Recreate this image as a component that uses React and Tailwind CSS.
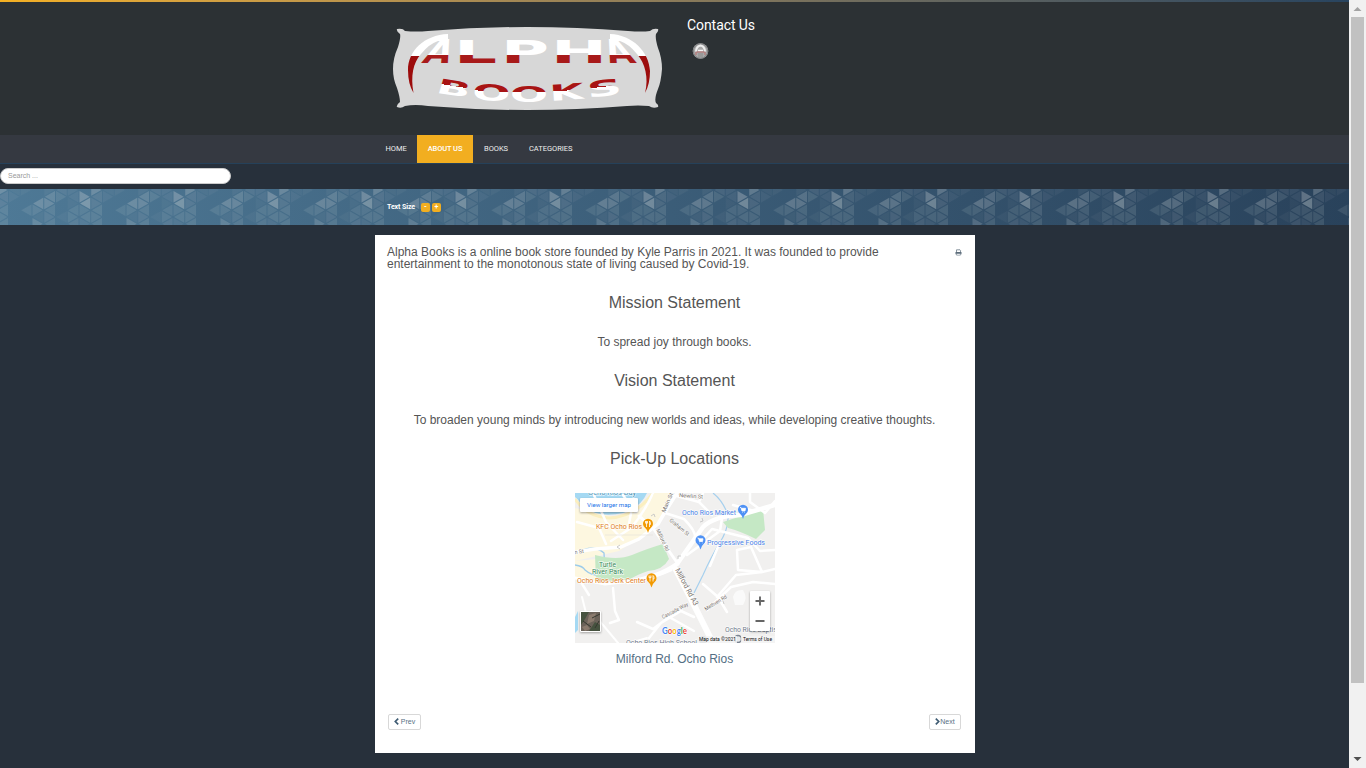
import React from "react";

const COL = 11.75;
const FACETS = [
  [0, "R", 1, 0.34], [0, "L", 7.75, 0.4], [0, "R", 14.5, 0.13], [0, "L", 21.25, 0.15], [0, "R", 28, 0.08],
  [1, "R", -5.75, 0.28], [1, "L", 1, 0.12], [1, "R", 7.75, 0.12], [1, "L", 14.5, 0.15], [1, "R", 21.25, 0.14], [1, "L", 28, 0.14],
  [2, "R", 1, 0.07], [2, "L", -5.75, 0.05],
  [3, "R", -5.75, 0.06], [3, "L", 14.5, 0.13],
  [4, "L", 7.75, 0.28], [4, "R", 14.5, 0.15], [4, "L", 21.25, 0.05], [4, "R", 28, 0.22],
  [5, "R", 7.75, 0.26], [5, "L", 1, 0.22], [5, "R", -5.75, 0.06], [5, "L", 14.5, 0.14], [5, "R", 21.25, 0.12], [5, "L", 28, 0.14],
  [6, "R", 1, 0.14], [6, "L", -5.75, 0.1], [6, "L", 21.25, 0.05],
  [7, "R", -5.75, 0.08], [7, "L", 1, 0.08], [7, "R", 7.75, 0.04], [7, "R", 21.25, 0.13], [7, "L", 14.5, 0.13], [7, "L", 28, 0.12],
];

function facetPoints(col, dir, y) {
  const a = col * COL + 0.5;
  const b = (col + 1) * COL - 0.5;
  const base = dir === "R" ? a : b;
  const tip = dir === "R" ? b - 0.6 : a + 0.6;
  return `${base},${y + 0.9} ${base},${y + 12.6} ${tip},${y + 6.75}`;
}

function FacetBand() {
  return (
    <svg className="absolute inset-0 h-full w-full" aria-hidden="true">
      <defs>
        <pattern id="facets" x="79" y="0" width="94" height="36" patternUnits="userSpaceOnUse">
          {FACETS.map(([c, d, y, o], i) => (
            <polygon key={i} points={facetPoints(c, d, y)} fill="#c4ccd0" fillOpacity={o} />
          ))}
        </pattern>
      </defs>
      <rect width="100%" height="36" fill="url(#facets)" />
    </svg>
  );
}

function LogoLetter({ ch, x, y, w, size, fill, turn }) {
  return (
    <text
      transform={turn ? `translate(${x} ${y}) ${turn}` : `translate(${x} ${y})`}
      fontSize={size}
      fontFamily="'DejaVu Sans', 'Liberation Sans', sans-serif"
      fontWeight="700"
      textLength={w}
      lengthAdjust="spacingAndGlyphs"
      fill={fill}
    >
      {ch}
    </text>
  );
}

function Logo() {
  return (
    <svg width="275" height="90" viewBox="390 24 275 90" className="block" role="img">
      <defs>
        <linearGradient id="topWord" gradientUnits="userSpaceOnUse" x1="0" x2="0" y1="-24" y2="0">
          <stop offset=".66" stopColor="#fff" />
          <stop offset=".66" stopColor="#a81a1a" />
        </linearGradient>
        <linearGradient id="lowWord" gradientUnits="userSpaceOnUse" x1="0" x2="0" y1="-16" y2="0">
          <stop offset=".42" stopColor="#a81414" />
          <stop offset=".42" stopColor="#fff" />
        </linearGradient>
        <linearGradient id="swoosh" gradientUnits="userSpaceOnUse" x1="0" x2="0" y1="34" y2="94">
          <stop offset=".36" stopColor="#fff" />
          <stop offset=".36" stopColor="#9c0c0c" />
        </linearGradient>
      </defs>
      <path
        fill="#d7d7d7"
        d="M397 29Q403 28 405 31Q416 32 428 31Q478 27 527 27Q577 27 628 31Q642 32 650 31Q653 28 658 29Q659 31 656 34Q655 38 658 48Q662 58 662 69Q661 82 658 89Q654 99 656 103Q659 105 658 107Q653 109 649 106Q638 105 627 106Q577 110 527 110Q478 110 428 106Q415 104 405 106Q401 109 397 107Q396 105 400 102Q400 97 397 88Q393 79 393 69Q393 58 398 47Q401 37 400 34Q396 31 397 29Z"
      />
      <path fill="url(#swoosh)" d="M448 34C424 35 408 51 408 70Q408 84 413.500 93C410.500 76 413 63 421 54Q429 44 438 41L448 41Z" />
      <path fill="url(#swoosh)" d="M610 34C633 35 649 52 650 71Q650 84 645 93C649 78 645 63 637 54Q629 44 620 41L610 41Z" />
      <LogoLetter ch="A" x={421} y={63} w={27} size={33} fill="url(#topWord)" turn="skewX(-24)" />
      <LogoLetter ch="L" x={454} y={63} w={43} size={31.500} fill="url(#topWord)" />
      <LogoLetter ch="P" x={501} y={63} w={48} size={31.500} fill="url(#topWord)" />
      <LogoLetter ch="H" x={551} y={63} w={56} size={31.500} fill="url(#topWord)" />
      <LogoLetter ch="A" x={610} y={63} w={27} size={33} fill="url(#topWord)" turn="skewX(24)" />
      <LogoLetter ch="B" x={435} y={92.500} w={34} size={20.500} fill="url(#lowWord)" turn="rotate(9) skewX(-8)" />
      <LogoLetter ch="O" x={472} y={99.500} w={38} size={22} fill="url(#lowWord)" turn="rotate(3)" />
      <LogoLetter ch="O" x={510} y={101.500} w={38} size={22} fill="url(#lowWord)" />
      <LogoLetter ch="K" x={550} y={101} w={34} size={22} fill="url(#lowWord)" turn="rotate(-4)" />
      <LogoLetter ch="S" x={588} y={98} w={35} size={22} fill="url(#lowWord)" turn="rotate(-7)" />
    </svg>
  );
}

function Badge() {
  return (
    <svg width="17" height="16" viewBox="-0.500 0 17 16" className="block">
      <circle cx="8" cy="8" r="7.800" fill="#a8a8a8" />
      <circle cx="8" cy="8" r="7.200" fill="none" stroke="#808284" strokeWidth="1" />
      <path d="M3.500 8.500Q4 3 8 2.500Q12 3 12.500 8.500" fill="none" stroke="#eee" strokeWidth="2" />
      <path d="M5.500 7.500H10.500" stroke="#f4f4f4" strokeWidth="1.500" />
      <path d="M3.500 9V12M12.500 9V12M4 9H12" stroke="#b86b6b" strokeWidth="1" fill="none" />
      <rect x="5.500" y="10" width="5" height="4" fill="#999" />
    </svg>
  );
}

function Pin({ x, y, color, kind }) {
  return (
    <g transform={`translate(${x} ${y})`}>
      <path d="M0 8Q-.7 4.500-3.200 2.500A5 5 0 1 1 3.200 2.500Q.7 4.500 0 8Z" fill={color} />
      {kind === "food" ? (
        <path d="M-1.500-4V2M-2.500-4V-1.800H-.5V-4M1.500 2V-4Q3-3 2.500-.5H1.500" fill="none" stroke="#fff" strokeWidth=".8" />
      ) : (
        <path d="M-3-3.500H-2L-1 0H2L2.500-2.700H-1.500M-1 1.500H-.5M1.500 1.500H2" fill="#fff" stroke="#fff" strokeWidth=".8" />
      )}
    </g>
  );
}

function MapLabel({ x, y, w, fill = "#77716b", size = 7, turn = 0, children }) {
  return (
    <text
      transform={`translate(${x} ${y}) rotate(${turn})`}
      fontSize={size}
      textLength={w}
      lengthAdjust="spacingAndGlyphs"
      fill={fill}
      stroke="#fff"
      strokeWidth="1.300"
      strokeOpacity=".75"
      paintOrder="stroke"
    >
      {children}
    </text>
  );
}

function LocationMap() {
  return (
    <svg width="200" height="150" viewBox="0 0 200 150" className="block" fontFamily="Roboto, sans-serif">
      <rect width="200" height="150" fill="#f1f0ef" />
      <path d="M0 15L40 24L62 20L78 0H97L88 24L67 43L44 58L0 68Z" fill="#fdf7e0" />
      <path d="M0 68L22 66L25 88L0 84Z" fill="#fdf7e0" />
      <path d="M0 0H72Q66 14 48 20Q22 26 7 12Q2 5 0 4Z" fill="#a5d9f3" />
      <path d="M0 6Q12 24 34 25Q60 24 78 0" fill="none" stroke="#fbefc0" strokeWidth="3" />
      <path d="M0 61Q18 50 29 60L30 82Q18 84 10 77Q8 73 0 72" fill="none" stroke="#9ccbea" strokeWidth="1.300" />
      <path d="M138 0Q148 8 153 22Q154 36 144 51Q136 64 128 82L119 100" fill="none" stroke="#a6d0ee" strokeWidth="1.200" />
      <path d="M0 124L3 118V137L0 140Z" fill="#a5d9f3" />
      <path d="M158 104Q160 96 168 97Q173 105 168 112L160 112Z" fill="#fafafa" />
      <path d="M20 62Q42 68 57 62Q74 55 88 51L94 66Q88 77 73 78Q61 82 54 87L21 88Z" fill="#c5e8c5" />
      <path d="M148 29L188 16L190 37L181 46Q165 38 153 35Z" fill="#c5e8c5" />
      <g fill="none" stroke="#fff" strokeLinejoin="round" strokeLinecap="round">
        <path strokeWidth="3.500" d="M0 59L20 56L46 54L64 46L83 31L90 19L102 0" />
        <path strokeWidth="4.500" d="M53 89Q84 84 102 71L128 34Q139 23 165 22L200 12" />
        <path strokeWidth="3" d="M0 85L30 91L56 88Q79 85 96 77" />
        <path strokeWidth="6" d="M101 77L114 102L138 150" />
        <path strokeWidth="3" d="M64 23L78 35L103 71" />
        <path strokeWidth="2.500" d="M90 20L109 26Q121 38 120 45M98 2L124 9L137 22M124 9L128 0M175 0V9L190 20L200 8M179 18L158 12" />
        <path strokeWidth="2.500" d="M78 0Q69 20 56 35L36 48M18 0L31 29L48 47M2 29L24 35L31 51M48 2L57 15L53 36" />
        <path strokeWidth="2.500" d="M147 25L145 38L112 62M145 38L137 36L127 47M145 38L173 45L185 58L200 57M162 57L176 54L187 79L200 76M162 57L163 77L187 79M145 49L135 73" />
        <path strokeWidth="2.500" d="M128 91L143 104L152 119M132 117L156 94L178 89L200 91M142 104L161 82L187 79" />
        <path strokeWidth="2.500" d="M62 129L78 136L94 124L119 138M86 130L106 118L119 124M38 95L40 118L44 127L35 130M4 86L14 102M86 130L74 145" />
        <path strokeWidth="2" d="M17 118L28 132L43 150M7 104L14 132M55 150L72 145" />
      </g>
      <path d="M30 42H78" stroke="#e4e0da" strokeWidth=".6" />
      <g fill="none" stroke="#c5c5c5" strokeWidth=".9">
        <path d="M45 52l-3 2l3 2M76 23l3-2l1 3M127 25l1 3l-3 1M106 63h-3v3M149 111l-1-3" />
      </g>
      <MapLabel x={13} y={2} w={48} fill="#4c91b2" size={7}>Ocho Rios Bay</MapLabel>
      <MapLabel x={104} y={4} w={24} size={5.500} turn={4}>Newlin St</MapLabel>
      <MapLabel x={90} y={20} w={21} size={5.500} turn={-67}>Main St</MapLabel>
      <MapLabel x={94} y={28} w={24} size={5.500} turn={39}>Graham St</MapLabel>
      <MapLabel x={81} y={37} w={24} size={5.500} turn={65}>Milford Rd</MapLabel>
      <MapLabel x={-9} y={62} w={18} size={5.500} turn={-7}>Main St</MapLabel>
      <MapLabel x={100} y={77} w={41} size={7.500} turn={62}>Milford Rd A3</MapLabel>
      <MapLabel x={88} y={126} w={29} size={5.500} turn={-28}>Cascade Way</MapLabel>
      <MapLabel x={131} y={118} w={25} size={5.500} turn={-32}>Methven Rd</MapLabel>
      <MapLabel x={21} y={35.500} w={46} fill="#df7c22">KFC Ocho Rios</MapLabel>
      <MapLabel x={2} y={90} w={69} fill="#df7c22">Ocho Rios Jerk Center</MapLabel>
      <MapLabel x={107} y={21.500} w={54} fill="#4a83e8">Ocho Rios Market</MapLabel>
      <MapLabel x={132} y={51.500} w={58} fill="#4a83e8">Progressive Foods</MapLabel>
      <MapLabel x={24} y={74} w={17} fill="#37885a">Turtle</MapLabel>
      <MapLabel x={17} y={81} w={31} fill="#37885a">River Park</MapLabel>
      <MapLabel x={150} y={139} w={54} fill="#727c8c">Ocho Rios Baptist</MapLabel>
      <MapLabel x={51} y={152} w={71} fill="#727c8c">Ocho Rios High School</MapLabel>
      <circle cx="128" cy="147" r="4" fill="#7b8491" />
      <circle cx="163" cy="146" r="3.500" fill="#e8eaec" stroke="#7b8491" strokeWidth="1.500" />
      <Pin x={73} y={32} color="#f29900" kind="food" />
      <Pin x={76.500} y={86.500} color="#f29900" kind="food" />
      <Pin x={168} y={18} color="#4e91f5" kind="shop" />
      <Pin x={125.500} y={48.500} color="#4e91f5" kind="shop" />
      <g filter="drop-shadow(0 1px 1px #0005)">
        <rect x="5" y="5" width="58" height="14" rx="1" fill="#fff" />
        <rect x="175" y="98" width="20" height="40" rx="1" fill="#fff" />
        <rect x="5" y="118" width="21" height="21" rx="1" fill="#fff" />
      </g>
      <text x="12" y="14" fontSize="6" textLength="44" lengthAdjust="spacingAndGlyphs" fill="#1a73e8">View larger map</text>
      <path d="M180.500 108H189.500M185 103.500V112.500M180.500 128H189.500" stroke="#666" strokeWidth="1.900" />
      <rect x="6" y="119" width="19" height="19" fill="#6b6259" />
      <path d="M6 119H14L10 126L6 132ZM14 138L20 129L25 132V138Z" fill="#46523f" />
      <path d="M14 122L21 120L19 128L12 131ZM7 134L12 132L15 136L10 138Z" fill="#8b7b6e" />
      <path d="M17 125L25 121M8 128L16 134M20 135L24 128" stroke="#36382f" strokeWidth="1" />
      <text x="87" y="141" fontSize="8.500" fontFamily="Lato, sans-serif" fontWeight="700" textLength="25" lengthAdjust="spacingAndGlyphs" stroke="#fff" strokeWidth="1" paintOrder="stroke">
        <tspan fill="#4285f4">G</tspan><tspan fill="#ea4335">o</tspan><tspan fill="#fbbc04">o</tspan><tspan fill="#4285f4">g</tspan><tspan fill="#34a853">l</tspan><tspan fill="#ea4335">e</tspan>
      </text>
      <path d="M123 143H162V150H123ZM166 143H200V150H166Z" fill="#f5f5f5" fillOpacity=".85" />
      <text x="124" y="148.300" fontSize="5.300" textLength="37" lengthAdjust="spacingAndGlyphs" fill="#111">Map data ©2021</text>
      <text x="168" y="148.300" fontSize="5.300" textLength="29" lengthAdjust="spacingAndGlyphs" fill="#111">Terms of Use</text>
    </svg>
  );
}

function PrinterIcon() {
  return (
    <svg width="7" height="7" viewBox="0 0 7 7" className="block">
      <path d="M1.500 3V.8H5L5.500 1.300V3" fill="none" stroke="#6a7a88" strokeWidth=".8" />
      <path d="M.5 3H6.500V5.300H.5Z" fill="#5d6c7a" />
      <path d="M1.600 4.500H5.400V6.200H1.600Z" fill="#fff" stroke="#6a7a88" strokeWidth=".6" />
    </svg>
  );
}

function Chevron({ flip }) {
  return (
    <svg width="5" height="7" viewBox="0 0 5 7" className={flip ? "-mt-px -scale-x-100" : "-mt-px"}>
      <path d="M4.200.6L1.300 3.500L4.200 6.400" fill="none" stroke="#3f5c73" strokeWidth="1.700" />
    </svg>
  );
}

function Scrollbar() {
  return (
    <div className="flex h-full w-[17px] flex-col bg-[#f1f1f1]">
      <svg width="17" height="17" className="block"><path d="M4.500 11H12.500L8.500 7Z" fill="#a3a3a3" /></svg>
      <div className="mx-auto h-[666px] w-[13px] bg-[#c1c1c1]" />
      <svg width="17" height="17" className="mt-auto block"><path d="M4.500 6H12.500L8.500 10Z" fill="#505050" /></svg>
    </div>
  );
}

export default function App() {
  return (
    <div className="flex h-[768px] w-[1366px] overflow-hidden font-['Liberation_Sans',Arial,sans-serif]">
      <div className="flex h-full w-[1349px] flex-col bg-[#27303b]">
        <div className="h-[2px] bg-linear-to-r from-[#f4b022] to-[#28445f]" />
        <header className="flex h-[133px] bg-[#2c3134] pl-[390px]">
          <div className="w-[297px] pt-[22px]"><Logo /></div>
          <div className="pt-[14px]">
            <h3 className="font-[Roboto,sans-serif] text-[14px] leading-[18px] tracking-[-0.07px] text-white">Contact Us</h3>
            <div className="pt-[9px] pl-[5px]"><Badge /></div>
          </div>
        </header>
        <nav className="flex h-[29px] border-b border-[#25415a] bg-[#353941] pl-[375px] font-[Roboto,sans-serif] text-[7.5px] leading-[27px] tracking-[-0.02px] text-[#eeeeee]">
          <a className="w-[42px] pl-[10.5px]">HOME</a>
          <a className="w-[56px] bg-[#f2ae20] text-center font-medium tracking-[-0.1px] text-white">ABOUT US</a>
          <a className="w-[45px] pl-[11px]">BOOKS</a>
          <a className="pl-[11px]">CATEGORIES</a>
        </nav>
        <div className="h-[25px] pt-[4px]">
          <div className="h-[16px] w-[231px] rounded-full border border-[#cccccc] bg-white pl-[7px] text-[7px] leading-[14px] text-[#999999]">Search ...</div>
        </div>
        <div className="relative h-[36px] bg-linear-to-r from-[#4e7996] to-[#29425b]">
          <FacetBand />
          <div className="relative flex h-full items-center pl-[387px] font-[Roboto,sans-serif] text-[7px] font-bold text-white">
            <span className="w-[34px] tracking-[-0.1px]">Text Size</span>
            <span className="h-[9px] w-[9px] rounded-[2px] bg-[#f2ae20] text-center leading-[8px]">-</span>
            <span className="ml-[2px] h-[9px] w-[9px] rounded-[2px] bg-[#f2ae20] text-center leading-[9px]">+</span>
          </div>
        </div>
        <main className="mt-[10px] ml-[375px] flex h-[518px] w-[600px] flex-col bg-white text-[12px] text-[#555555]">
          <div className="flex justify-between pt-[11px] pr-[13px] pl-[12px]">
            <p className="w-[530px] leading-[12px]">
              Alpha Books is a online book store founded by Kyle Parris in 2021. It was founded to provide
              <br />
              entertainment to the monotonous state of living caused by Covid-19.
            </p>
            <div className="pt-[3px]"><PrinterIcon /></div>
          </div>
          <div className="flex flex-col items-center text-center">
            <h2 className="mt-[23px] pr-px text-[16px] leading-[20px]">Mission Statement</h2>
            <p className="mt-[22px] pr-px leading-[14px]">To spread joy through books.</p>
            <h2 className="mt-[22px] pr-px text-[16px] leading-[20px]">Vision Statement</h2>
            <p className="mt-[22px] pr-px leading-[14px]">To broaden young minds by introducing new worlds and ideas, while developing creative thoughts.</p>
            <h2 className="mt-[22px] pr-px text-[16px] leading-[20px]">Pick-Up Locations</h2>
            <div className="mt-[24px]"><LocationMap /></div>
            <p className="mt-[9px] pr-px leading-[14px] text-[#546f84]">Milford Rd. Ocho Rios</p>
          </div>
          <div className="mt-auto mb-[23px] flex justify-between pr-[14px] pl-[13px] text-[7px] text-[#587083]">
            <button className="flex h-[16px] w-[33px] items-center justify-center gap-[2px] rounded-[2px] border border-[#d8d8d8]"><Chevron />Prev</button>
            <button className="flex h-[16px] w-[32px] items-center justify-center rounded-[2px] border border-[#d8d8d8]"><Chevron flip />Next</button>
          </div>
        </main>
      </div>
      <Scrollbar />
    </div>
  );
}
